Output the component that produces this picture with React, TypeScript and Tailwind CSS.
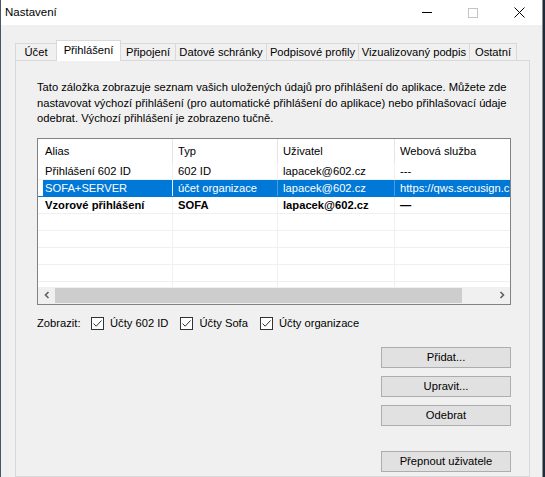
import React from 'react';

const FONT = { fontFamily: '"Liberation Sans", Arial, sans-serif' };

const TABS = [
  { label: 'Účet', cls: 'w-[41px] border-l' },
  { label: 'Přihlášení', cls: 'w-[65px] border-l border-r', active: true },
  { label: 'Připojení', cls: 'w-[54px]' },
  { label: 'Datové schránky', cls: 'w-[91px] border-l' },
  { label: 'Podpisové profily', cls: 'w-[92px] border-l' },
  { label: 'Vizualizovaný podpis', cls: 'w-[111px] border-l' },
  { label: 'Ostatní', cls: 'w-[48px] border-l border-r' },
];

const ROWS = [
  { alias: 'Přihlášení 602 ID', typ: '602 ID', user: 'lapacek@602.cz', web: '---' },
  { alias: 'SOFA+SERVER', typ: 'účet organizace', user: 'lapacek@602.cz', web: 'https://qws.secusign.cz', selected: true },
  { alias: 'Vzorové přihlášení', typ: 'SOFA', user: 'lapacek@602.cz', web: '—', bold: true },
];

function Row({ alias, typ, user, web, selected, bold }: { alias: string; typ: string; user: string; web: string; selected?: boolean; bold?: boolean }) {
  const cell = selected ? 'bg-[#0078d7] text-white border-[#4c9be2]' : 'border-[#f0f0f0]';
  return (
    <div className={`flex h-[17px] shrink-0 leading-[17px] whitespace-nowrap border-b ${selected ? 'border-[#0078d7]' : 'border-[#f0f0f0]'} ${bold ? 'font-bold' : ''}`}>
      <div className="w-[135px] shrink-0 pl-[5px] border-r border-[#f0f0f0]">
        <div className={`h-full pl-[2px] ${selected ? 'bg-[#0078d7] text-white' : ''}`}>{alias}</div>
      </div>
      <div className={`w-[105px] shrink-0 pl-[5px] border-r ${cell}`}>{typ}</div>
      <div className={`w-[117px] shrink-0 pl-[5px] border-r ${cell}`}>{user}</div>
      <div className={`flex-1 pl-[5px] overflow-hidden ${selected ? 'bg-[#0078d7] text-white' : ''}`}>{web}</div>
    </div>
  );
}

function EmptyRow() {
  return (
    <div className="flex h-[17px] shrink-0 border-b border-[#f0f0f0]">
      <div className="w-[135px] shrink-0 border-r border-[#f0f0f0]" />
      <div className="w-[105px] shrink-0 border-r border-[#f0f0f0]" />
      <div className="w-[117px] shrink-0 border-r border-[#f0f0f0]" />
      <div className="flex-1" />
    </div>
  );
}

function Check({ label }: { label: string }) {
  return (
    <label className="flex items-center gap-[6px]">
      <span className="w-[13px] h-[13px] border border-[#333333] bg-white flex items-center justify-center">
        <svg width="11" height="11" viewBox="0 0 11 11">
          <path d="M1.5 5.5 L4.2 8.2 L9.5 2.5" fill="none" stroke="#333333" strokeWidth="1" />
        </svg>
      </span>
      <span>{label}</span>
    </label>
  );
}

function Btn({ children }: { children: React.ReactNode }) {
  return (
    <button type="button" className="w-[130px] h-[21px] bg-[#e1e1e1] border border-[#adadad] text-black leading-[19px] text-center">
      {children}
    </button>
  );
}

export default function App() {
  return (
    <div className="w-[545px] h-[477px] overflow-hidden flex bg-[#1d2b3d] text-[11.2px] text-black" style={FONT}>
      <div className="w-px bg-[#4a5566] shrink-0" />
      <div className="w-[542px] shrink-0 bg-[#f0f0f0] flex flex-col border-r border-[#8c8c8c]">
        {/* title bar */}
        <div className="h-[25px] bg-white flex items-center shrink-0 text-[11.5px]">
          <span className="pl-[4px] pt-[1px]">Nastavení</span>
          <div className="ml-auto flex h-full">
            <div className="w-[46px] flex items-center justify-center">
              <div className="w-[10px] h-px bg-black" />
            </div>
            <div className="w-[46px] flex items-center justify-center">
              <div className="w-[10px] h-[10px] border border-[#c4c4c4]" />
            </div>
            <div className="w-[46px] flex items-center justify-center">
              <svg width="11" height="11" viewBox="0 0 11 11">
                <path d="M0.5 0.5 L10.5 10.5 M10.5 0.5 L0.5 10.5" stroke="#000" strokeWidth="1" />
              </svg>
            </div>
          </div>
        </div>

        {/* tab strip */}
        <div className="mt-[15px] pl-[14px] flex items-end h-[21px] relative z-10 shrink-0 whitespace-nowrap">
          {TABS.map(t => (
            <div
              key={t.label}
              className={`${t.cls} shrink-0 text-center border-t border-[#d9d9d9] ${
                t.active
                  ? 'h-[21px] bg-white leading-[19px] relative z-10'
                  : 'h-[18px] bg-[#f0f0f0] leading-[16px] border-b'
              }`}
            >
              {t.label}
            </div>
          ))}
        </div>

        {/* tab page */}
        <div className="-mt-px ml-[14px] w-[515px] flex-1 border border-[#d9d9d9] bg-[#f0f0f0] pl-[21px] pt-[19px]">
          <p className="leading-[15.5px] whitespace-nowrap">
            Tato záložka zobrazuje seznam vašich uložených údajů pro přihlášení do aplikace. Můžete zde
            <br />
            nastavovat výchozí přihlášení (pro automatické přihlášení do aplikace) nebo přihlašovací údaje
            <br />
            odebrat. Výchozí přihlášení je zobrazeno tučně.
          </p>

          {/* list view */}
          <div className="mt-[11px] w-[474px] h-[167px] border border-[#828282] bg-white flex flex-col overflow-hidden">
            <div className="flex h-[24px] shrink-0 leading-[24px]">
              <div className="w-[135px] shrink-0 pl-[7px] border-r border-[#e5e5e5]">Alias</div>
              <div className="w-[105px] shrink-0 pl-[5px] border-r border-[#e5e5e5]">Typ</div>
              <div className="w-[117px] shrink-0 pl-[5px] border-r border-[#e5e5e5]">Uživatel</div>
              <div className="flex-1 pl-[5px]">Webová služba</div>
            </div>
            <div className="flex-1 flex flex-col overflow-hidden">
              {ROWS.map(r => (
                <Row key={r.alias} {...r} />
              ))}
              {[0, 1, 2, 3, 4].map(i => (
                <EmptyRow key={i} />
              ))}
            </div>
            <div className="h-[17px] shrink-0 flex bg-[#f0f0f0]">
              <div className="w-[17px] flex items-center justify-center">
                <svg width="8" height="8" viewBox="0 0 8 8">
                  <path d="M5.5 1 L2.5 4 L5.5 7" fill="none" stroke="#606060" strokeWidth="1.6" />
                </svg>
              </div>
              <div className="w-[407px] my-px bg-[#cdcdcd]" />
              <div className="flex-1" />
              <div className="w-[17px] flex items-center justify-center">
                <svg width="8" height="8" viewBox="0 0 8 8">
                  <path d="M2.5 1 L5.5 4 L2.5 7" fill="none" stroke="#606060" strokeWidth="1.6" />
                </svg>
              </div>
            </div>
          </div>

          {/* filters */}
          <div className="mt-[11px] flex items-center h-[15px]">
            <span className="w-[54px] shrink-0">Zobrazit:</span>
            <div className="flex items-center gap-[12px]">
              <Check label="Účty 602 ID" />
              <Check label="Účty Sofa" />
              <Check label="Účty organizace" />
            </div>
          </div>

          {/* buttons */}
          <div className="mt-[16px] ml-[344px] flex flex-col">
            <Btn>Přidat...</Btn>
            <div className="h-[8px]" />
            <Btn>Upravit...</Btn>
            <div className="h-[8px]" />
            <Btn>Odebrat</Btn>
            <div className="h-[25px]" />
            <Btn>Přepnout uživatele</Btn>
          </div>
        </div>
      </div>
    </div>
  );
}
